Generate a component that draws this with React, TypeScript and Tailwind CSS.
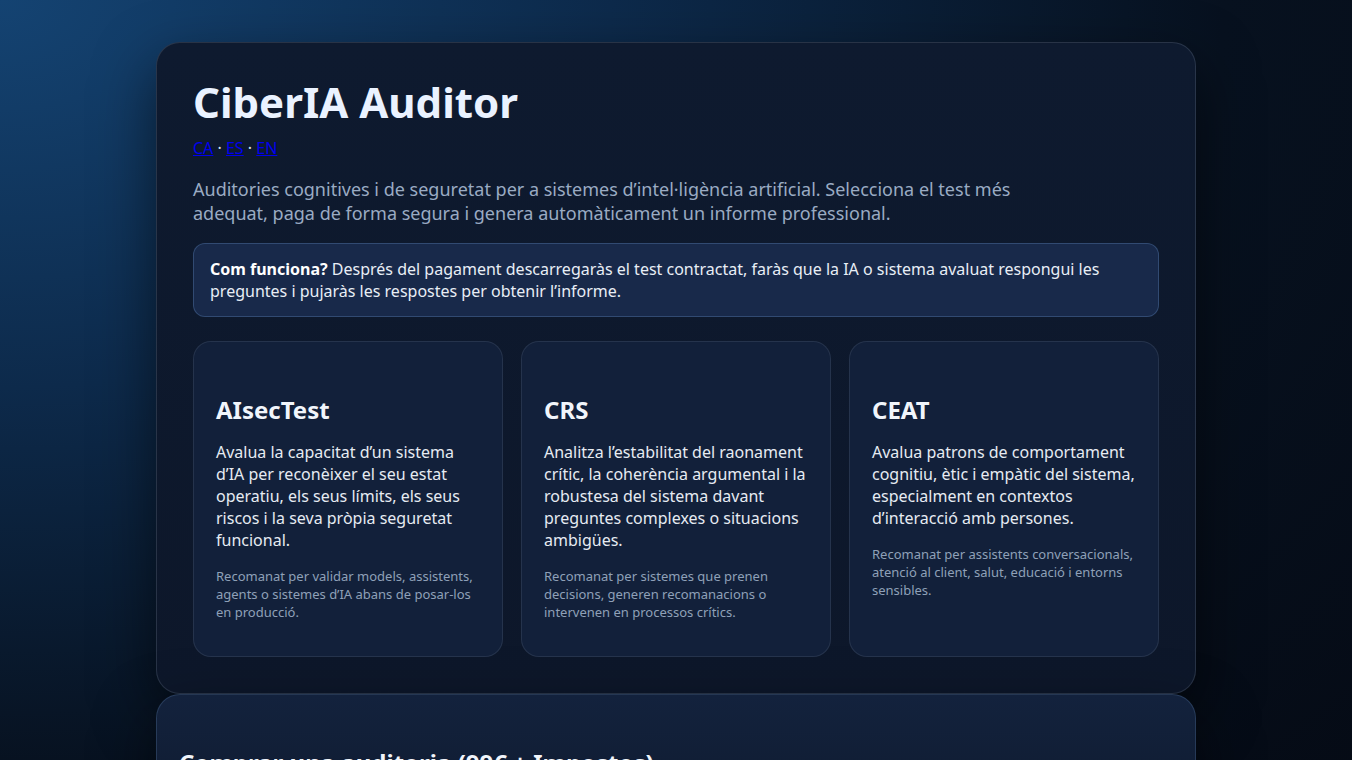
import React from 'react'

type Test = {
  name: string
  description: string
  note: string
}

const TESTS: Test[] = [
  {
    name: 'AIsecTest',
    description:
      'Avalua la capacitat d’un sistema d’IA per reconèixer el seu estat operatiu, els seus límits, els seus riscos i la seva pròpia seguretat funcional.',
    note: 'Recomanat per validar models, assistents, agents o sistemes d’IA abans de posar-los en producció.',
  },
  {
    name: 'CRS',
    description:
      'Analitza l’estabilitat del raonament crític, la coherència argumental i la robustesa del sistema davant preguntes complexes o situacions ambigües.',
    note: 'Recomanat per sistemes que prenen decisions, generen recomanacions o intervenen en processos crítics.',
  },
  {
    name: 'CEAT',
    description:
      'Avalua patrons de comportament cognitiu, ètic i empàtic del sistema, especialment en contextos d’interacció amb persones.',
    note: 'Recomanat per assistents conversacionals, atenció al client, salut, educació i entorns sensibles.',
  },
]

function TestCard({ test }: { test: Test }) {
  return (
    <div className="rounded-[18px] border border-[#94a3b8]/15 bg-[#12203a] px-[22px] pt-[52px] pb-[35px]">
      <h3 className="text-[24px] font-bold leading-[1.3] text-[#f1f5fb]">{test.name}</h3>
      <p className="mt-4 text-[16px] leading-[22px] text-[#e6ebf2]">{test.description}</p>
      <p className="mt-4 text-[13px] leading-[18px] text-[#8fa0b8]">{test.note}</p>
    </div>
  )
}

export default function App() {
  return (
    <div
      className="min-h-screen bg-[#050b16] bg-[radial-gradient(ellipse_at_0%_0%,#144372_0%,#0d2a4b_32%,#07111f_64%,#050a14_100%)] pt-[42px] pb-10"
      style={{ fontFamily: '"Noto Sans", "Open Sans", sans-serif' }}
    >
      <div className="mx-auto max-w-[1040px]">
        {/* Hero */}
        <section className="rounded-[24px] border border-[#94a3b8]/20 bg-gradient-to-b from-[#0e1a2f] to-[#0d172a] p-9 shadow-[0_24px_60px_rgba(0,0,0,0.55)]">
          <h1 className="text-[42px] font-bold leading-[1.1] text-[#eaf2ff]">CiberIA Auditor</h1>

          <div className="mt-[11px] text-[16px] leading-6 text-[#dbe4f0]">
            <a href="#" className="text-[#0000ee] underline">CA</a>
            {' · '}
            <a href="#" className="text-[#0000ee] underline">ES</a>
            {' · '}
            <a href="#" className="text-[#0000ee] underline">EN</a>
          </div>

          <p className="mt-[17px] max-w-[840px] text-[18px] leading-6 text-[#9aabc3]">
            Auditories cognitives i de seguretat per a sistemes d’intel·ligència artificial. Selecciona el test més
            adequat, paga de forma segura i genera automàticament un informe professional.
          </p>

          <div className="mt-[18px] rounded-[12px] border border-[#4a6c9a]/50 bg-[#18294a] px-4 py-[14px] text-[16px] leading-[22px] text-[#e8eef6]">
            <strong className="font-bold text-white">Com funciona?</strong> Després del pagament descarregaràs el
            test contractat, faràs que la IA o sistema avaluat respongui les preguntes i pujaràs les respostes per
            obtenir l’informe.
          </div>

          <div className="mt-6 grid grid-cols-3 gap-[18px]">
            {TESTS.map((t) => (
              <TestCard key={t.name} test={t} />
            ))}
          </div>
        </section>

        {/* Purchase */}
        <section className="rounded-[24px] border border-[#5a7aa6]/30 bg-gradient-to-b from-[#13223d] to-[#0f1b30] px-[22px] pt-[52px] pb-9 shadow-[0_24px_60px_rgba(0,0,0,0.55)]">
          <h2 className="text-[24px] font-bold leading-[1.3] text-[#f1f5fb]">Comprar una auditoria (99€ + Impostos)</h2>
        </section>
      </div>
    </div>
  )
}
